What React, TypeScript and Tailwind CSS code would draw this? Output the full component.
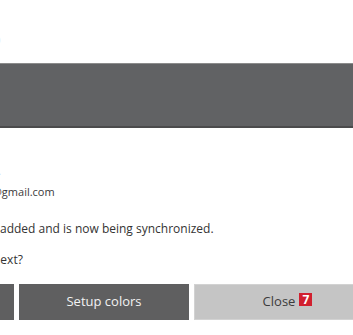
const App = () => {
  return (
    <div
      className="w-[353px] h-[335px] overflow-hidden bg-white text-[#333333]"
      style={{ fontFamily: '"Open Sans", "Noto Sans", sans-serif' }}
    >
      {/* heading cut off on the left */}
      <div className="h-[63px] pt-[12px]">
        <div className="-ml-[17px] text-[34px] leading-[44px] text-[#cfcfcf]">S</div>
      </div>

      <div className="h-[65px] bg-[#616264] border-t border-t-[#8c8c8c] border-b-2 border-b-[#4b4b4c]" />

      <div className="pt-[38px]">
        <div className="-ml-[2px] h-[10px] text-[11px] leading-[10px] text-[#9a9a9a]">.</div>
        <div className="-ml-[8px] mt-[9px] text-[11px] leading-[14px] text-[#3a3a3a]">@gmail.com</div>
        <div className="mt-[21px] text-[12px] leading-[18px]">added and is now being synchronized.</div>
        <div className="-ml-[7px] mt-[13px] text-[12px] leading-[18px]">next?</div>
      </div>

      <div className="mt-[15px] flex gap-[5px] -ml-[156px]">
        <button className="h-[36px] w-[170px] shrink-0 bg-[#5f5f60] text-[13px] text-white">
          Get started
        </button>
        <button className="h-[36px] w-[170px] shrink-0 bg-[#5f5f60] text-[13px] text-[#f2f2f2]">
          Setup colors
        </button>
        <button className="h-[36px] w-[170px] shrink-0 bg-[#c5c5c5] border border-[#d2d2d2] text-[13px] text-[#3c3c3c]">
          <span className="relative">
            Close
            <span className="absolute left-[calc(100%+4px)] top-[1px] flex h-[13px] w-[13px] items-center justify-center bg-[#d1202f] text-[12px] font-bold leading-none text-white">
              7
            </span>
          </span>
        </button>
      </div>
    </div>
  );
};

export default App;
